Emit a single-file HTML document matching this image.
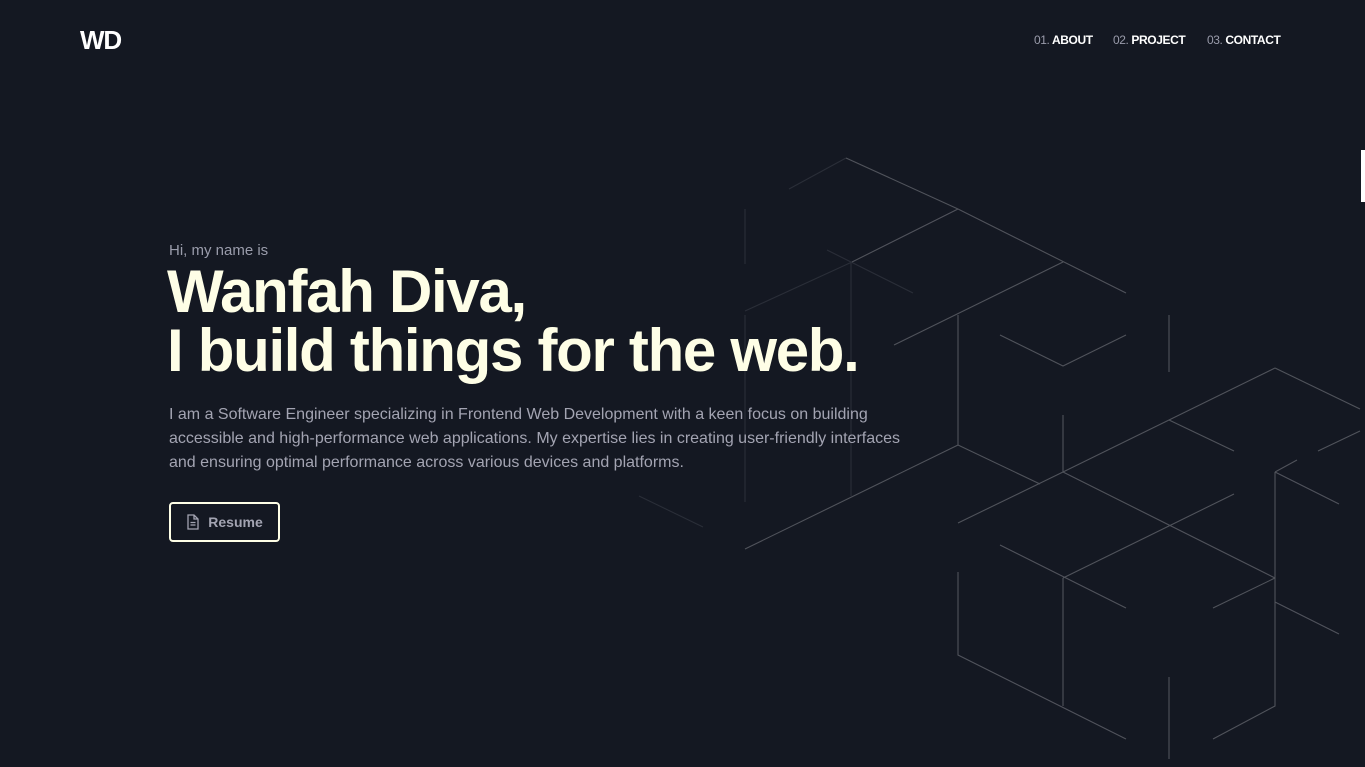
<!DOCTYPE html>
<html><head><meta charset="utf-8"><style>
*{margin:0;padding:0;box-sizing:border-box}
html,body{width:1365px;height:767px;overflow:hidden;background:#141822;font-family:"Liberation Sans",sans-serif}
.logo{position:absolute;left:80px;top:25px;font-size:26px;font-weight:900;color:#fff;letter-spacing:-1.2px}
.nav{position:absolute;top:33px;font-size:12px;font-weight:bold;color:#fff;letter-spacing:-0.4px}
.nav span{color:#9a9cab;font-weight:normal}
.hi{position:absolute;left:169px;top:242px;font-size:15px;color:#9a9cab}
h1{position:absolute;left:167px;top:262px;font-size:60px;line-height:59px;font-weight:900;color:#fefee6;letter-spacing:-1.3px;white-space:nowrap}
p{position:absolute;left:169px;top:403px;width:752px;font-size:16px;line-height:24px;color:#a3a4b2}
.btn{position:absolute;left:169px;top:502px;width:111px;height:40px;border:2px solid #fefee6;border-radius:4px;color:#a3a4b2;font-size:14px;font-weight:bold;display:flex;align-items:center;justify-content:center;gap:8px}
.bar{position:absolute;left:1361px;top:150px;width:4px;height:52px;background:#fff}
</style></head><body>
<div class="logo">WD</div>
<div class="nav" style="left:1034px"><span>01.</span> ABOUT</div>
<div class="nav" style="left:1113px"><span>02.</span> PROJECT</div>
<div class="nav" style="left:1207px"><span>03.</span> CONTACT</div>
<svg width="1365" height="767" style="position:absolute;left:0;top:0" fill="none" stroke-width="1.1">
<g stroke="#2a2e38">
<path d="M789 189L846 158M852 262L745 311M745 209V264M745 315V502M851 262V496M639 496L703 527M827 250L913 293"/>
</g>
<g stroke="#50535b">
<path d="M846 158L958 209L1126 293M958 209L852 262M1063 262L894 345M1000 335L1063 366L1126 335M1169 315V372M958 315V445L745 549M958 445L1040 484M1063 415V472"/>
<path d="M1275 368L1360 409M1275 368L1169 420L1063 472L958 523M1169 420L1234 451M1063 472L1275 578M1234 494L1063 578M1000 545L1126 608M1063 578V706M958 572V655L1126 739M1169 677V759M1275 472V706L1213 739M1275 472L1339 504M1275 472L1297 460M1318 451L1360 431M1275 578L1213 608M1275 602L1339 634"/>
</g>
</svg>
<div class="hi">Hi, my name is</div>
<h1>Wanfah Diva,<br>I build things for the web.</h1>
<p>I am a Software Engineer specializing in Frontend Web Development with a keen focus on building accessible and high-performance web applications. My expertise lies in creating user-friendly interfaces and ensuring optimal performance across various devices and platforms.</p>
<div class="btn"><svg width="14" height="16" viewBox="0 0 14 16" fill="none" stroke="#a3a4b2" stroke-width="1.3"><path d="M2 1h6l4 4v10H2z M8 1v4h4 M4.5 8.5h5M4.5 11h5"/></svg>Resume</div>
<div class="bar"></div>
</body></html>
